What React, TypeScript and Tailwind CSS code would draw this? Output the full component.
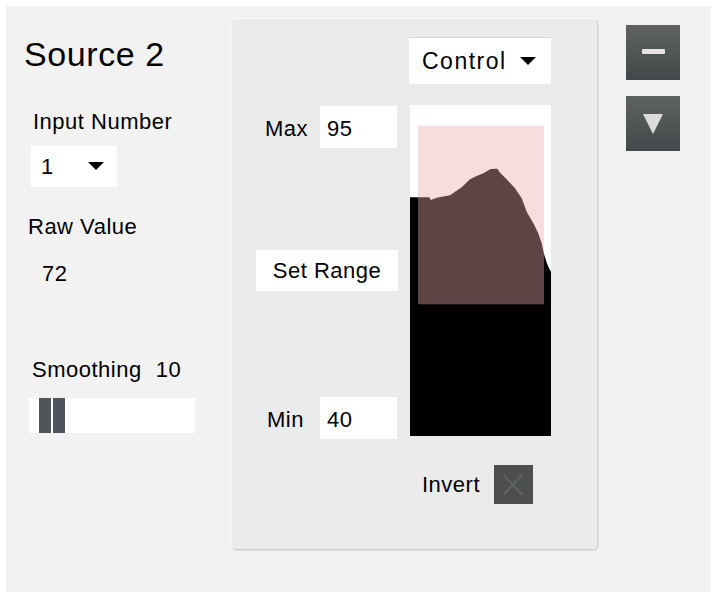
import React from 'react';

const GRAPH_PATH =
  'M0,331 L0,92.3 L19.3,92.3 L20.7,95 L26.7,92.7 L40,90.3 L45,86.7 L51.7,82.3 L60,74.3 L66.7,71 L73.3,68.3 L80.7,64 L87.3,63.7 L90,67.7 L96.7,74.3 L105,83.3 L111.7,93.3 L116.7,106.7 L123.3,118.3 L128.3,128.3 L131.7,138.3 L134,149 L136.7,157.7 L139,163.3 L141,166.7 L141,331 Z';

const Caret = ({ className = '' }: { className?: string }) => (
  <svg width="16" height="8" viewBox="0 0 16 8" className={className}>
    <polygon points="0,0 16,0 8,8" fill="#000" />
  </svg>
);

function SourcePanel() {
  return (
    <div className="flex flex-col items-start w-[225px] shrink-0">
      <div className="mt-[29px] ml-[18px] h-[38px] text-[34px] leading-[38px] tracking-[0.6px]">Source 2</div>
      <div className="mt-[37px] ml-[27px] h-[24px] leading-[24px]">Input Number</div>
      <div className="mt-[12px] ml-[25px] w-[86px] h-[41px] bg-white flex items-center pl-[10px]">
        <span className="w-[47px] leading-[41px]">1</span>
        <Caret className="mb-[2px]" />
      </div>
      <div className="mt-[28px] ml-[22px] h-[24px] leading-[24px]">Raw Value</div>
      <div className="mt-[23px] ml-[36px] h-[24px] leading-[24px]">72</div>
      <div className="mt-[72px] ml-[26px] h-[24px] leading-[24px] flex">
        <span>Smoothing</span>
        <span className="ml-[14px]">10</span>
      </div>
      <div className="mt-[16px] ml-[23px] w-[166px] h-[35px] bg-white flex pl-[10px] gap-[2px]">
        <div className="w-[12px] h-full bg-[#51555b]" />
        <div className="w-[12px] h-full bg-[#51555b]" />
      </div>
    </div>
  );
}

function RangePanel() {
  return (
    <div className="mt-[12px] w-[367px] h-[532px] shrink-0 rounded-[5px] border border-t-[#f8f8f8] border-l-[#f6f6f6] border-r-[#d2d2d2] border-b-[#c9c9c9] bg-[#ebebeb] shadow-[1px_1px_1px_rgba(0,0,0,0.08)] flex items-start">
      <div className="w-[177px] flex flex-col items-start">
        <div className="mt-[87px] flex">
          <div className="w-[88px] pl-[33px] pt-[11px] leading-[24px]">Max</div>
          <div className="w-[77px] h-[42px] bg-white pl-[7px] pt-[11px] leading-[24px]">95</div>
        </div>
        <div className="mt-[102px] ml-[24px] w-[142px] h-[41px] bg-white text-center leading-[41px]">Set Range</div>
        <div className="mt-[106px] flex">
          <div className="w-[88px] pl-[35px] pt-[11px] leading-[24px]">Min</div>
          <div className="w-[77px] h-[42px] bg-white pl-[7px] pt-[11px] leading-[24px]">40</div>
        </div>
      </div>
      <div className="w-[142px] flex flex-col items-start">
        <div className="mt-[18px] w-[142px] h-[47px] bg-white border-t border-[#d6d6d6] flex items-center pl-[13px]">
          <span className="w-[98px] text-[23px] tracking-[1.5px] leading-[46px]">Control</span>
          <Caret />
        </div>
        <svg width="141" height="331" viewBox="0 0 141 331" className="mt-[21px] ml-[1px]">
          <rect x="0" y="0" width="141" height="331" fill="#fff" />
          <path d={GRAPH_PATH} fill="#000" />
          <rect x="8" y="20.7" width="126" height="178.6" fill="rgba(235,170,170,0.4)" />
        </svg>
        <div className="mt-[29px] w-full flex items-center justify-end pr-[18px]">
          <span className="leading-[24px]">Invert</span>
          <div className="ml-[14px] w-[39px] h-[39px] bg-[#4d4f4f] flex items-center justify-center">
            <svg width="39" height="39" viewBox="0 0 39 39">
              <path d="M9.5 10 L28 29.5 M28 10 L9.5 29.5" stroke="#606363" strokeWidth="2" />
            </svg>
          </div>
        </div>
      </div>
    </div>
  );
}

function SideButtons() {
  return (
    <div className="ml-[28px] mt-[19px] flex flex-col gap-[16px]">
      <button className="w-[54px] h-[55px] bg-linear-to-b from-[#5f6261] to-[#45484a] flex items-center justify-center">
        <div className="w-[23px] h-[5px] bg-[#e3e3e3] rounded-[1px] mb-[2px]" />
      </button>
      <button className="w-[54px] h-[55px] bg-linear-to-b from-[#5f6261] to-[#45484a] flex items-center justify-center">
        <svg width="20" height="20" viewBox="0 0 20 20">
          <polygon points="0,0 20,0 10,20" fill="#dcdcdc" />
        </svg>
      </button>
    </div>
  );
}

export default function App() {
  return (
    <div className="w-[719px] h-[600px] bg-white pt-[6px] pl-[6px] font-['Liberation_Sans',Arial,sans-serif] text-[22px] tracking-[0.5px] text-black">
      <div className="w-[705px] h-[586px] bg-[#f2f2f2] flex items-start">
        <SourcePanel />
        <RangePanel />
        <SideButtons />
      </div>
    </div>
  );
}
